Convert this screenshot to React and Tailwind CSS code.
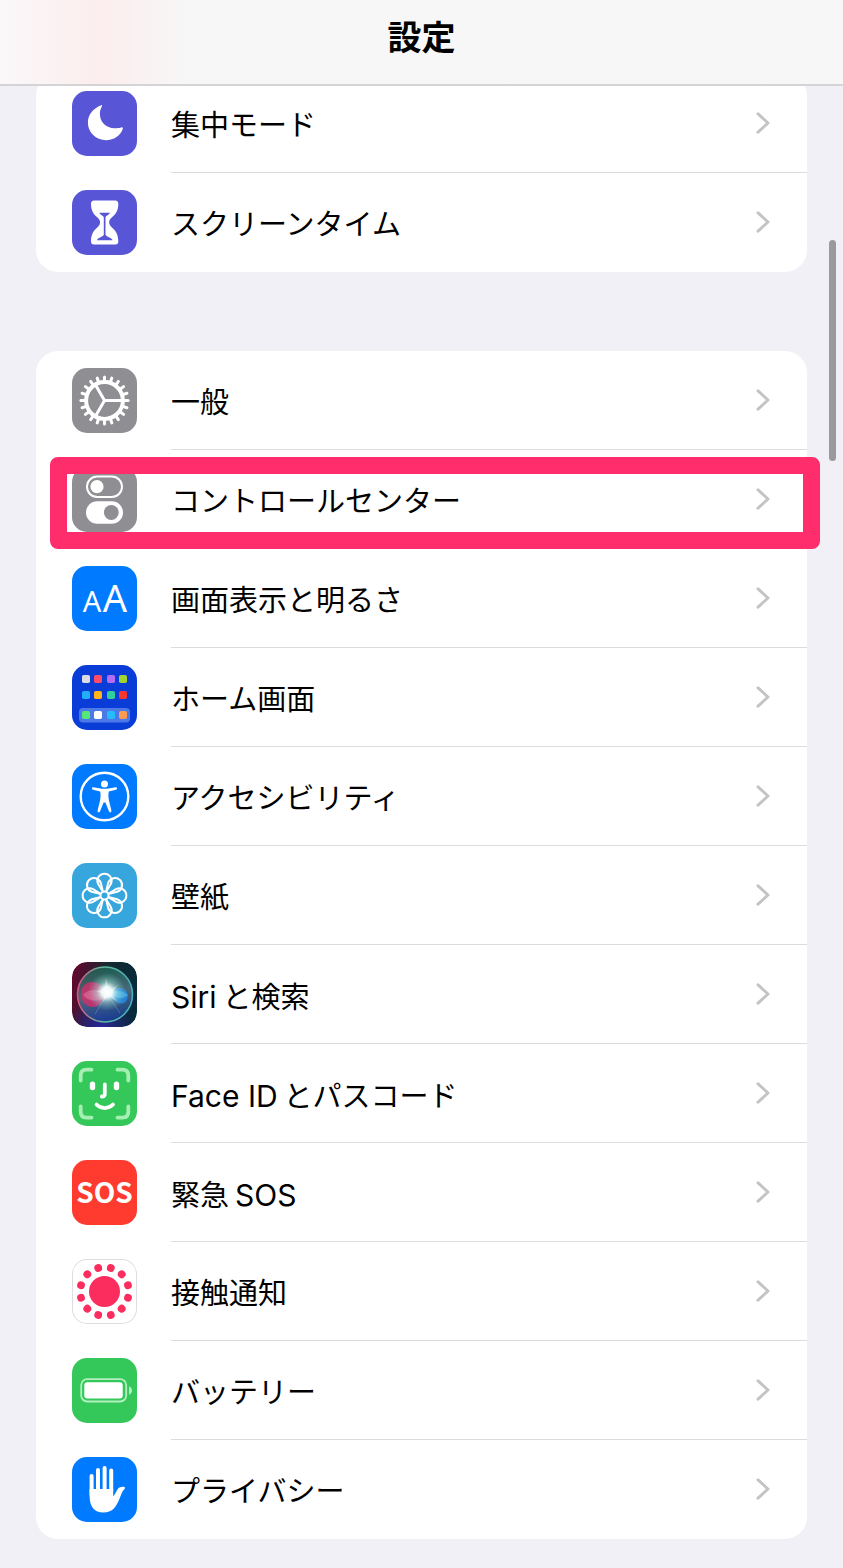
const iconBase = "block size-[65px] rounded-[15px]";

function MoonIcon() {
  return (
    <svg viewBox="0 0 65 65" className={`${iconBase} bg-[#5856d6]`} aria-hidden="true">
      <path
        d="M29.3 14.2C21 17.2 15.9 23.8 15.9 31.5C15.9 41.5 24 49.2 34 49.2C41.8 49.2 48.5 44.8 50.8 37.8C51.1 36.7 50.3 36.1 49.2 36.4C46.8 37 45 37.2 42.8 37.2C33.8 37.2 27.9 31.2 27.9 22.8C27.9 20.2 28.5 18 29.7 15.7C30.3 14.5 30.2 13.9 29.3 14.2Z"
        fill="#fff"
      />
    </svg>
  );
}

function HourglassIcon() {
  return (
    <svg viewBox="0 0 65 65" className={`${iconBase} bg-[#5856d6]`} aria-hidden="true">
      <path
        d="M22 10.5H43.3C45.3 10.5 46.3 11.8 46.3 13.8C46.3 20.5 44 24 40 27.3C37.5 29.5 37.2 31 37.2 32.5C37.2 34.2 38 35.8 40.2 37.7C44 41 46.3 44.8 46.3 51.2C46.3 53.3 45.3 54.5 43.3 54.5H22C20 54.5 19 53.3 19 51.2C19 44.8 21.3 41 25 37.7C27.3 35.8 28 34.2 28 32.5C28 31 27.7 29.5 25.2 27.3C21.3 24 19 20.5 19 13.8C19 11.8 20 10.5 22 10.5Z"
        fill="#fff"
      />
      <path
        d="M27.3 22.7H38C37.3 24.6 33.5 25.8 33.5 27.5V44.5C33.5 46.8 40 47.4 40.5 50.3H25C25.5 47.4 31.8 46.8 31.8 44.5V27.5C31.8 25.8 28 24.6 27.3 22.7Z"
        fill="#5856d6"
      />
    </svg>
  );
}

const gearTeeth = Array.from({ length: 20 }, (_, i) => i * 18);

function GearIcon() {
  return (
    <svg viewBox="0 0 65 65" className={`${iconBase} bg-[#8e8e93]`} aria-hidden="true">
      <g transform="translate(32.5 32.5)" fill="none" stroke="#fff">
        <circle r="18.4" strokeWidth="4" />
        <g strokeWidth="3" strokeLinecap="round">
          {gearTeeth.map((angle) => (
            <path key={angle} d="M20 0H23.6" transform={`rotate(${angle})`} />
          ))}
        </g>
        <path d="M0 0H17M0 0L-8.5 -14.7M0 0L-8.5 14.7" strokeWidth="3" />
      </g>
    </svg>
  );
}

function ControlCenterIcon() {
  return (
    <svg viewBox="0 0 65 65" className={`${iconBase} bg-[#8e8e93]`} aria-hidden="true">
      <rect x="15" y="9.5" width="35" height="20.5" rx="10.2" fill="none" stroke="#fff" strokeWidth="2" />
      <circle cx="25" cy="19.7" r="6.6" fill="#fff" />
      <rect x="14" y="34.2" width="37" height="22.6" rx="11.3" fill="#fff" />
      <circle cx="39.3" cy="45.5" r="7.4" fill="#8e8e93" />
    </svg>
  );
}

function DisplayIcon() {
  return (
    <svg viewBox="0 0 65 65" className={`${iconBase} bg-[#007aff]`} aria-hidden="true">
      <g fill="#fff" fontFamily="'Noto Sans', sans-serif" fontWeight="400" textAnchor="middle">
        <text x="20" y="46" fontSize="29">A</text>
        <text x="43" y="46" fontSize="38">A</text>
      </g>
    </svg>
  );
}

const homeApps = [
  { x: 10, y: 10, color: "#dcdce4" },
  { x: 22, y: 10, color: "#ff4a68" },
  { x: 35, y: 10, color: "#b46cf5" },
  { x: 47, y: 10, color: "#a4d52f" },
  { x: 10, y: 26, color: "#22aef8" },
  { x: 22, y: 26, color: "#ffb41c" },
  { x: 35, y: 26, color: "#30d09c" },
  { x: 47, y: 26, color: "#f8372f" },
  { x: 10, y: 46, color: "#55e878" },
  { x: 22, y: 46, color: "#ffffff" },
  { x: 35, y: 46, color: "#24bcfa" },
  { x: 47, y: 46, color: "#ff9a50" },
];

function HomeScreenIcon() {
  return (
    <svg viewBox="0 0 65 65" className={`${iconBase} bg-[#0a3cd8]`} aria-hidden="true">
      <rect x="7" y="43" width="51" height="14.5" rx="4" fill="#4d78e8" />
      {homeApps.map((app) => (
        <rect key={`${app.x}-${app.y}`} x={app.x} y={app.y} width="8" height="8" rx="1.8" fill={app.color} />
      ))}
    </svg>
  );
}

function AccessibilityIcon() {
  return (
    <svg viewBox="0 0 65 65" className={`${iconBase} bg-[#007aff]`} aria-hidden="true">
      <circle cx="32.5" cy="32.5" r="23.8" fill="none" stroke="#fff" strokeWidth="2.4" />
      <circle cx="32.5" cy="20" r="3.5" fill="#fff" />
      <path
        d="M21.3 23.3L30 24.7H35L43.7 23.3C45.3 23.1 45.6 25.4 44 25.8L36.8 27.6C36.2 30.5 36.4 33.8 37 36.5L39.4 46.6C39.7 48.5 37.6 49.1 36.9 47.3L33.4 38.4H31.6L28.1 47.3C27.4 49.1 25.3 48.5 25.6 46.6L28 36.5C28.6 33.8 28.8 30.5 28.2 27.6L21 25.8C19.4 25.4 19.7 23.1 21.3 23.3Z"
        fill="#fff"
      />
    </svg>
  );
}

const petals = [0, 45, 90, 135, 180, 225, 270, 315];

function WallpaperIcon() {
  return (
    <svg viewBox="0 0 65 65" className={`${iconBase} bg-[#37a6dc]`} aria-hidden="true">
      <g transform="translate(32.5 32.5)" fill="none" stroke="#fff" strokeWidth="2">
        {petals.map((angle) => (
          <path
            key={angle}
            d="M-1.6 -3.8L-6.3 -11.5A7.1 7.1 0 1 1 6.3 -11.5L1.6 -3.8"
            transform={`rotate(${angle})`}
          />
        ))}
        <circle r="4" />
      </g>
    </svg>
  );
}

function SiriIcon() {
  return (
    <svg viewBox="0 0 65 65" className={iconBase} aria-hidden="true">
      <defs>
        <linearGradient id="siri-bg" x1="0" y1="0.3" x2="1" y2="0.5">
          <stop offset="0" stopColor="#62082e" />
          <stop offset="0.5" stopColor="#132a30" />
          <stop offset="1" stopColor="#082a3c" />
        </linearGradient>
        <radialGradient id="siri-violet" cx="0.45" cy="1" r="0.5">
          <stop offset="0" stopColor="#2c249c" />
          <stop offset="1" stopColor="#2c249c" stopOpacity="0" />
        </radialGradient>
        <linearGradient id="siri-orb" x1="0.4" y1="0" x2="0.6" y2="1">
          <stop offset="0" stopColor="#1c6c58" />
          <stop offset="0.5" stopColor="#5c7c90" />
          <stop offset="1" stopColor="#10409c" />
        </linearGradient>
        <linearGradient id="siri-ring" x1="0" y1="0.5" x2="1" y2="0.5">
          <stop offset="0" stopColor="#dc5080" />
          <stop offset="0.45" stopColor="#5cb89c" />
          <stop offset="1" stopColor="#48b0bc" />
        </linearGradient>
        <radialGradient id="siri-glow">
          <stop offset="0" stopColor="#fff" />
          <stop offset="0.28" stopColor="#f0fffd" stopOpacity="0.95" />
          <stop offset="0.55" stopColor="#b8f0e8" stopOpacity="0.45" />
          <stop offset="1" stopColor="#80d8cc" stopOpacity="0" />
        </radialGradient>
      </defs>
      <rect width="65" height="65" rx="15" fill="url(#siri-bg)" />
      <rect width="65" height="65" rx="15" fill="url(#siri-violet)" />
      <circle cx="33" cy="32.5" r="27.5" fill="url(#siri-orb)" fillOpacity="0.75" stroke="url(#siri-ring)" strokeWidth="1.6" />
      <path d="M35 31C30 23 25 20 20 20C13 20 9 26 9 32C9 39 14 45 21 45C28 45 31 38 36 32Z" fill="#e02a6c" fillOpacity="0.75" />
      <path d="M11 33C16 26 28 27 37 33C29 40 17 41 11 33Z" fill="#f090b4" fillOpacity="0.4" />
      <path d="M35 32C42 26 47 25 52 27C57 30 57 38 52 41C45 43 41 37 35 32Z" fill="#2488e4" fillOpacity="0.85" />
      <path d="M37 32C43 28 51 28 56 33C51 38 43 36 37 32Z" fill="#60cce8" fillOpacity="0.5" />
      <path d="M23 52L35 32L48 51" fill="none" stroke="#6488d0" strokeOpacity="0.6" />
      <circle cx="35" cy="30" r="19" fill="url(#siri-glow)" />
      <path d="M34 16L37.5 28L46 23L39.5 31.5L45 39L36.5 34L31 40L32.5 32L24 29L32 27.5Z" fill="#fff" fillOpacity="0.35" />
    </svg>
  );
}

function FaceIdIcon() {
  return (
    <svg viewBox="0 0 65 65" className={`${iconBase} bg-[#34c759]`} aria-hidden="true">
      <g fill="none" strokeLinecap="round">
        <path
          d="M8.7 19.5V14.5Q8.7 8.7 14.5 8.7H19.5M45.5 8.7H50.5Q56.3 8.7 56.3 14.5V19.5M56.3 45.5V50.8Q56.3 56.6 50.5 56.6H45.5M19.5 56.6H14.5Q8.7 56.6 8.7 50.8V45.5"
          stroke="#a5efb2"
          strokeWidth="3.8"
        />
        <path d="M20.5 23.3V26.5M44.5 23.3V26.5" stroke="#fff" strokeWidth="5.4" />
        <path d="M32.8 23.5V33C32.8 34.8 31.7 35.6 29.8 35.5M24.5 43.5C29 48.2 36.5 48.2 41 43.5" stroke="#fff" strokeWidth="3.8" />
      </g>
    </svg>
  );
}

function SosIcon() {
  return (
    <svg viewBox="0 0 65 65" className={`${iconBase} bg-[#ff3b30]`} aria-hidden="true">
      <text
        x="32.5"
        y="43"
        fill="#fff"
        fontFamily="'Noto Sans CJK JP', sans-serif"
        fontSize="28"
        fontWeight="700"
        textAnchor="middle"
      >
        SOS
      </text>
    </svg>
  );
}

const exposureDots = [15, 45, 75, 105, 135, 165, 195, 225, 255, 285, 315, 345];

function ExposureIcon() {
  return (
    <svg viewBox="0 0 65 65" className={`${iconBase} bg-white ring-1 ring-[#dedee0] ring-inset`} aria-hidden="true">
      <g transform="translate(32.5 32.5)" fill="#fb2d5f">
        <circle r="15.5" />
        {exposureDots.map((angle) => (
          <circle key={angle} cx="24.3" r="3.9" transform={`rotate(${angle})`} />
        ))}
      </g>
    </svg>
  );
}

function BatteryIcon() {
  return (
    <svg viewBox="0 0 65 65" className={`${iconBase} bg-[#34c759]`} aria-hidden="true">
      <rect x="9.2" y="21.2" width="45" height="22.3" rx="6" fill="none" stroke="#b2f0bf" strokeWidth="1.8" />
      <rect x="12.3" y="24.3" width="38.4" height="16.2" rx="3" fill="#fff" />
      <path d="M57 28.2C61 29.7 61 35.2 57 36.7Z" fill="#b2f0bf" />
    </svg>
  );
}

function HandIcon() {
  return (
    <svg viewBox="0 0 65 65" className={`${iconBase} bg-[#007aff]`} aria-hidden="true">
      <path d="M19.6 38V19M26 33V13M32.6 33V11M39.2 34V13.5" stroke="#fff" strokeWidth="4" strokeLinecap="round" />
      <path
        d="M17.6 32H41.2V39.2C42.5 38.5 43.7 35.5 45 33.2C46.7 30.3 49.5 29.4 52.2 30C53.4 30.3 53.3 31.2 52.5 31.9C50.3 34 49.2 37.5 47.6 41.5C44 50.8 40 55.5 31.5 55.5C22 55.5 17.6 49.5 17.6 39Z"
        fill="#fff"
      />
    </svg>
  );
}

function Chevron() {
  return (
    <svg viewBox="0 0 14 22" className="h-[22px] w-3.5 shrink-0" aria-hidden="true">
      <path
        d="M2 1.8L12 11L2 20.2"
        fill="none"
        stroke="#c4c4c7"
        strokeWidth="3"
        strokeLinecap="round"
        strokeLinejoin="round"
      />
    </svg>
  );
}

// latin runs get a little air next to the kana, as iOS sets them
function Label({ before, latin, after }) {
  return (
    <span className="flex items-baseline gap-1.5 pt-1.5">
      {before && <span>{before}</span>}
      {latin && <span className="text-[30px]">{latin}</span>}
      {after && <span>{after}</span>}
    </span>
  );
}

const focusItems = [
  { id: "focus", Icon: MoonIcon, after: "集中モード" },
  { id: "screen-time", Icon: HourglassIcon, after: "スクリーンタイム" },
];

const generalItems = [
  { id: "general", Icon: GearIcon, after: "一般" },
  { id: "control-center", Icon: ControlCenterIcon, after: "コントロールセンター", highlighted: true },
  { id: "display", Icon: DisplayIcon, after: "画面表示と明るさ" },
  { id: "home", Icon: HomeScreenIcon, after: "ホーム画面" },
  { id: "accessibility", Icon: AccessibilityIcon, after: "アクセシビリティ" },
  { id: "wallpaper", Icon: WallpaperIcon, after: "壁紙" },
  { id: "siri", Icon: SiriIcon, latin: "Siri", after: "と検索" },
  { id: "face-id", Icon: FaceIdIcon, latin: "Face ID", after: "とパスコード" },
  { id: "sos", Icon: SosIcon, before: "緊急", latin: "SOS" },
  { id: "exposure", Icon: ExposureIcon, after: "接触通知" },
  { id: "battery", Icon: BatteryIcon, after: "バッテリー" },
  { id: "privacy", Icon: HandIcon, after: "プライバシー" },
];

function SettingsRow({ item }) {
  const { id, Icon, before, latin, after, highlighted } = item;

  return (
    <li className="group relative">
      <a href={`#${id}`} className="flex h-[99px] items-center gap-[34px] pl-9">
        <span className="shrink-0">
          <Icon />
        </span>
        <span className="flex h-full min-w-0 flex-1 items-center justify-between border-b border-[#dcdcde] pr-[37px] group-last:border-transparent">
          <Label before={before} latin={latin} after={after} />
          <Chevron />
        </span>
      </a>
      {highlighted && (
        <div className="pointer-events-none absolute -right-[13px] bottom-0 left-3.5 top-[7px] rounded-lg border-[17px] border-[#ff2d6c]" />
      )}
    </li>
  );
}

function SettingsGroup({ items }) {
  return (
    <ul className="rounded-[22px] bg-white">
      {items.map((item) => (
        <SettingsRow key={item.id} item={item} />
      ))}
    </ul>
  );
}

export default function App() {
  return (
    <div className="relative min-h-screen bg-[#f1f0f6] font-['Inter','Noto_Sans_CJK_JP',sans-serif] text-[29px] leading-10 text-black">
      <header className="relative z-10 flex h-[86px] items-start justify-center border-b-2 border-[#d4d4d6] bg-[#f7f7f7] bg-linear-to-r from-[#faf8f9] via-[#fcedee] via-12% to-[#f7f7f7] to-22% pt-[18px]">
        <h1 className="text-[34px] leading-10 font-bold">設定</h1>
      </header>
      <main className="-mt-3 flex flex-col gap-[79px] px-9 pb-[29px]">
        <SettingsGroup items={focusItems} />
        <SettingsGroup items={generalItems} />
      </main>
      <div className="absolute top-60 right-[7px] h-[221px] w-[7px] rounded-full bg-[#9a999e]" />
    </div>
  );
}
